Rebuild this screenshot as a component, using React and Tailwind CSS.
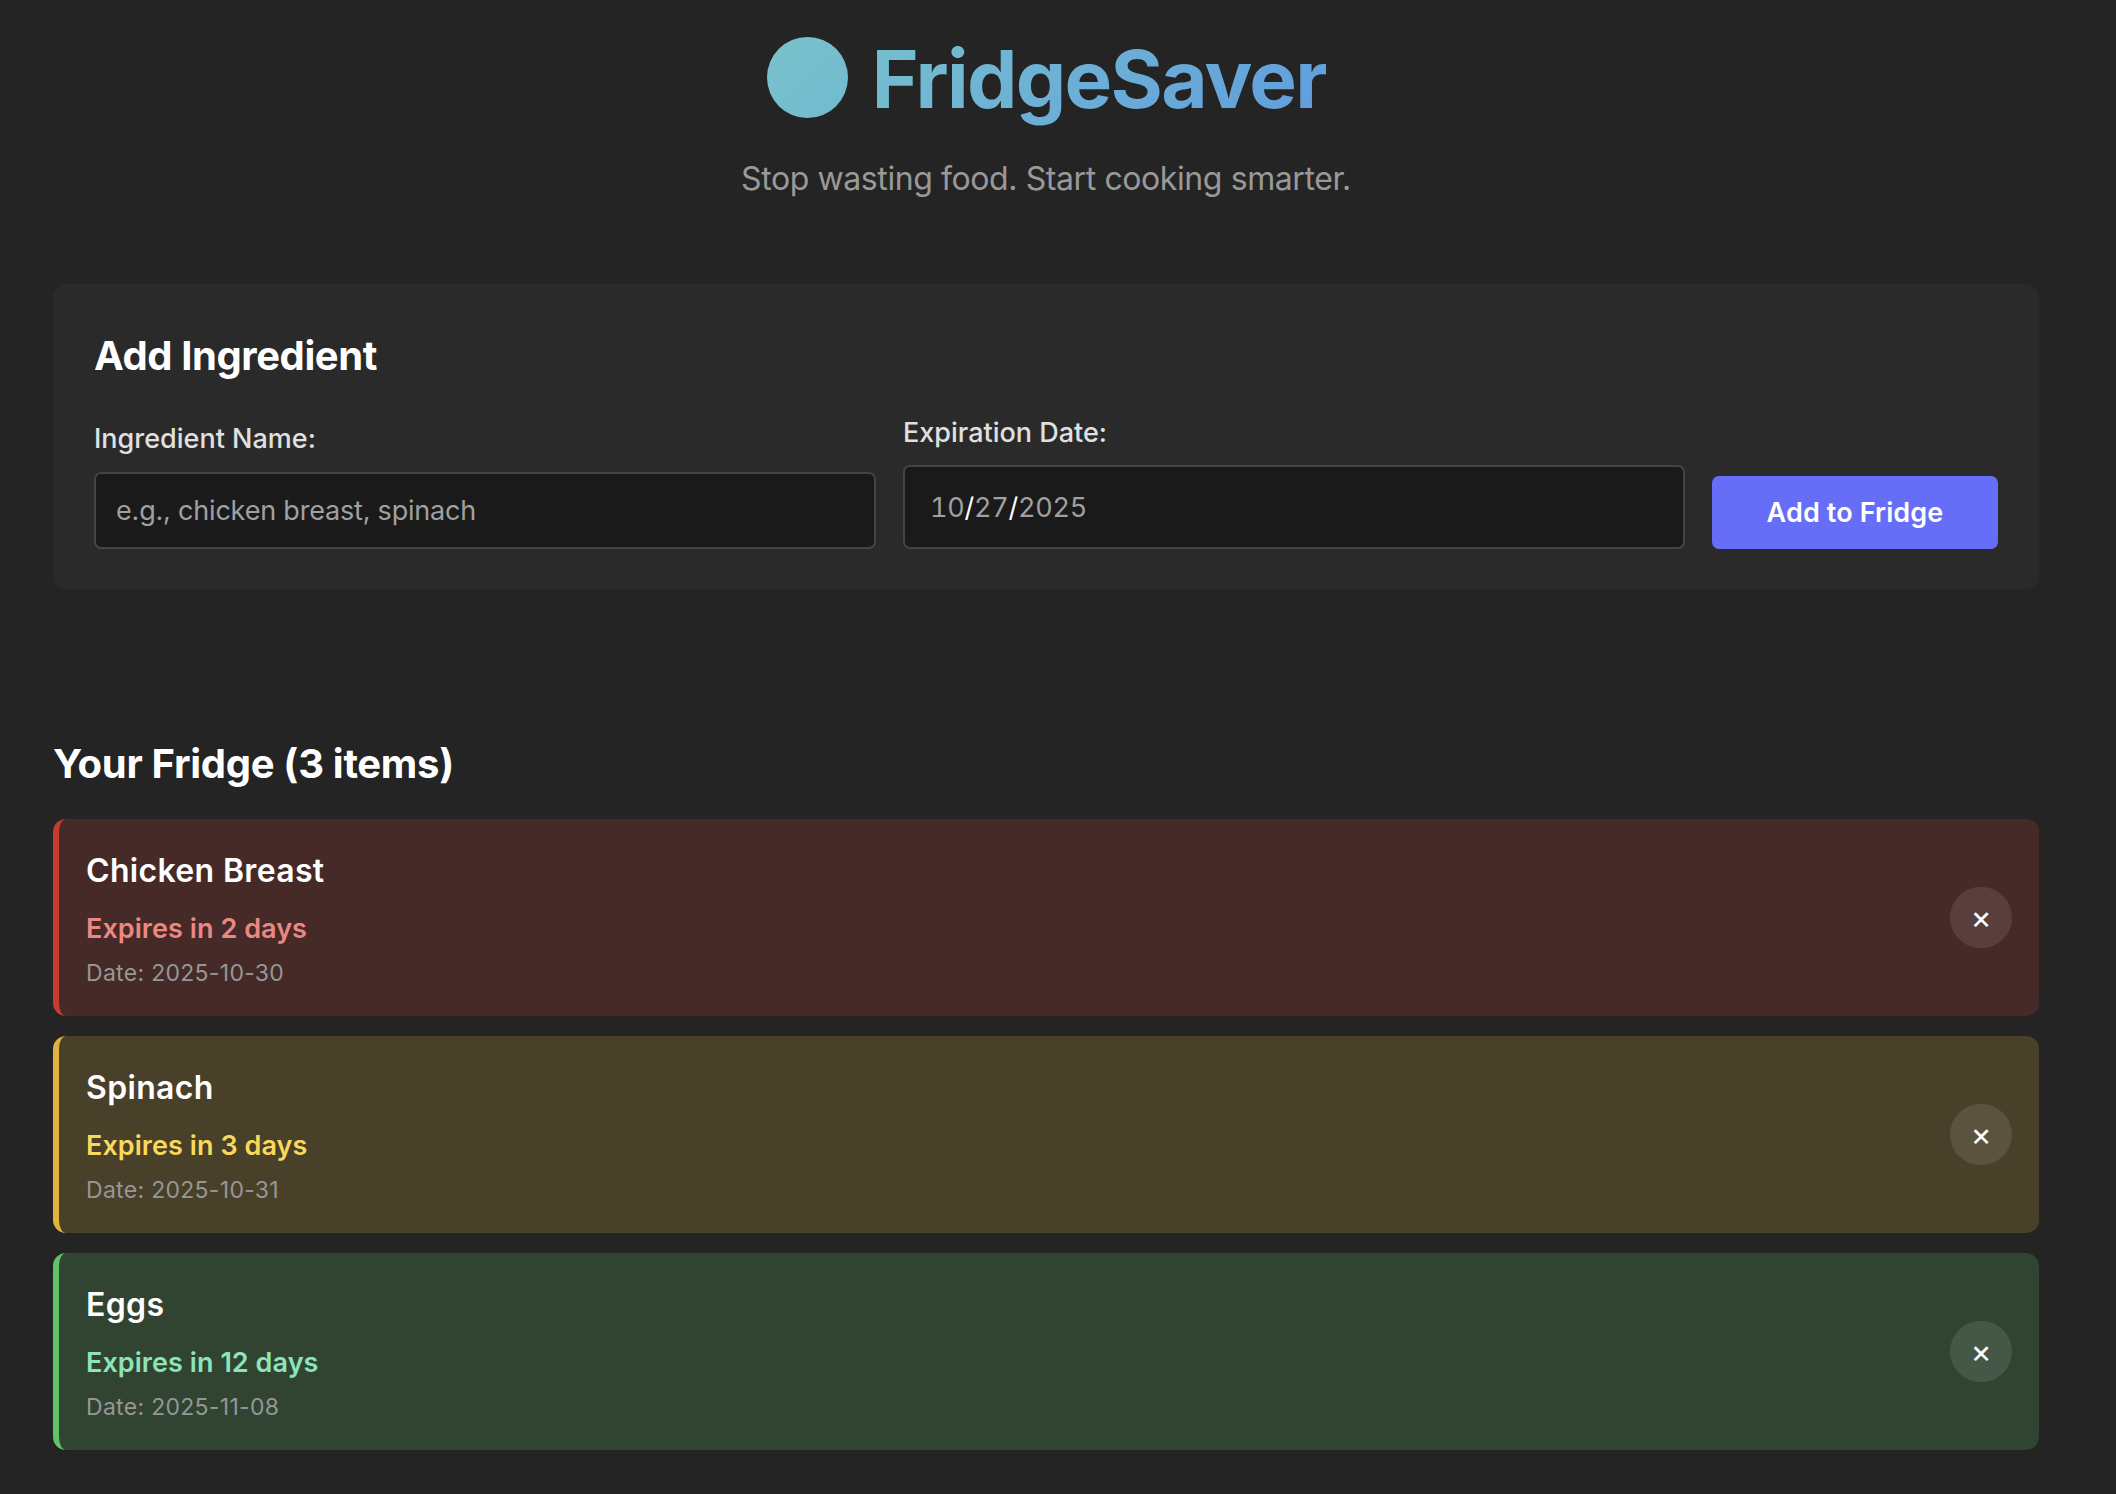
import React from "react";

const items = [
  {
    name: "Chicken Breast",
    status: "Expires in 2 days",
    date: "2025-10-30",
    card: "bg-[#452a28] border-[#c93a31]",
    text: "text-[#ec8783]",
  },
  {
    name: "Spinach",
    status: "Expires in 3 days",
    date: "2025-10-31",
    card: "bg-[#494029] border-[#e0b33e]",
    text: "text-[#f9d85c]",
  },
  {
    name: "Eggs",
    status: "Expires in 12 days",
    date: "2025-11-08",
    card: "bg-[#304431] border-[#5fc467]",
    text: "text-[#8ce5b8]",
  },
];

function Header() {
  return (
    <header className="flex flex-col items-center">
      <h1 className="flex h-24 items-center gap-[24px] pl-px text-[80px] leading-[96px] font-bold tracking-[-1.7px]">
        <span className="-mt-[3px] h-[81px] w-[81px] rounded-full bg-linear-135 from-[#79c3ca] to-[#72b9d1]" />
        <span className="bg-linear-135 from-[#76bfce] to-[#619cde] bg-clip-text text-transparent">
          FridgeSaver
        </span>
      </h1>
      <p className="mt-8 text-[32px] leading-10 tracking-[-0.407px] text-[#999999]">
        Stop wasting food. Start cooking smarter.
      </p>
    </header>
  );
}

function AddIngredient() {
  return (
    <section className="mt-[85px] h-[305px] rounded-[13px] bg-[#2a2a2a] px-[41px] pt-12">
      <h2 className="text-[40px] leading-[48px] font-bold tracking-[-0.42px] text-white">
        Add Ingredient
      </h2>
      <form className="flex h-[169px] items-end gap-[27px]">
        <div className="flex flex-1 flex-col">
          <label className="mb-[17px] text-[27px] leading-8 font-medium text-[#e0e0e0]">
            Ingredient Name:
          </label>
          <input
            type="text"
            placeholder="e.g., chicken breast, spinach"
            className="h-[77px] rounded-[7px] border-2 border-[#444444] bg-[#1a1a1a] px-5 text-[27px] tracking-[-0.197px] text-white placeholder:text-[#a0a0a0]"
          />
        </div>
        <div className="flex flex-1 flex-col">
          <label className="mb-[16px] text-[27px] leading-8 font-medium text-[#e0e0e0]">
            Expiration Date:
          </label>
          <div className="flex h-[84px] items-center rounded-[7px] border-2 border-[#444444] bg-[#1a1a1a] px-[25px] pt-0.5 text-[27px] tracking-[-0.25px] text-[#a0a0a0] tabular-nums">
            <span>10</span>
            <span className="text-white">/</span>
            <span>27</span>
            <span className="text-white">/</span>
            <span>2025</span>
          </div>
        </div>
        <button
          type="button"
          className="h-[73px] w-[286px] rounded-[7px] bg-[#666ef7] pt-0.5 text-[27px] font-semibold tracking-[0.118px] text-white"
        >
          Add to Fridge
        </button>
      </form>
    </section>
  );
}

function FridgeItem({ item }) {
  return (
    <li
      className={`flex h-[197px] items-center justify-between rounded-[13px] border-l-[6px] pr-[27px] pl-[27px] ${item.card}`}
    >
      <div className="h-full pt-8">
        <h3 className="text-[32px] leading-10 font-semibold tracking-[0.33px] text-white">
          {item.name}
        </h3>
        <p className={`mt-[22px] text-[27px] leading-8 font-semibold tracking-[0.06px] ${item.text}`}>
          {item.status}
        </p>
        <p className="mt-[14px] text-[23px] leading-7 tracking-[0.3px] text-[#969696]">
          Date: {item.date}
        </p>
      </div>
      <button
        type="button"
        aria-label={`Remove ${item.name}`}
        className="h-[61px] w-[62px] rounded-full bg-white/10 text-[32px] leading-[61px] font-normal text-white"
      >
        ×
      </button>
    </li>
  );
}

export default function App() {
  return (
    <div className="h-[1494px] overflow-hidden bg-[#242424] pt-[31px] pr-[77px] pl-[53px] font-['Inter',sans-serif]">
      <Header />
      <AddIngredient />
      <section className="mt-[151px]">
        <h2 className="text-[40px] leading-[48px] font-bold tracking-[-0.3px] text-white">
          Your Fridge (3 items)
        </h2>
        <ul className="mt-[31px] flex flex-col gap-5">
          {items.map((item) => (
            <FridgeItem key={item.name} item={item} />
          ))}
        </ul>
      </section>
    </div>
  );
}
